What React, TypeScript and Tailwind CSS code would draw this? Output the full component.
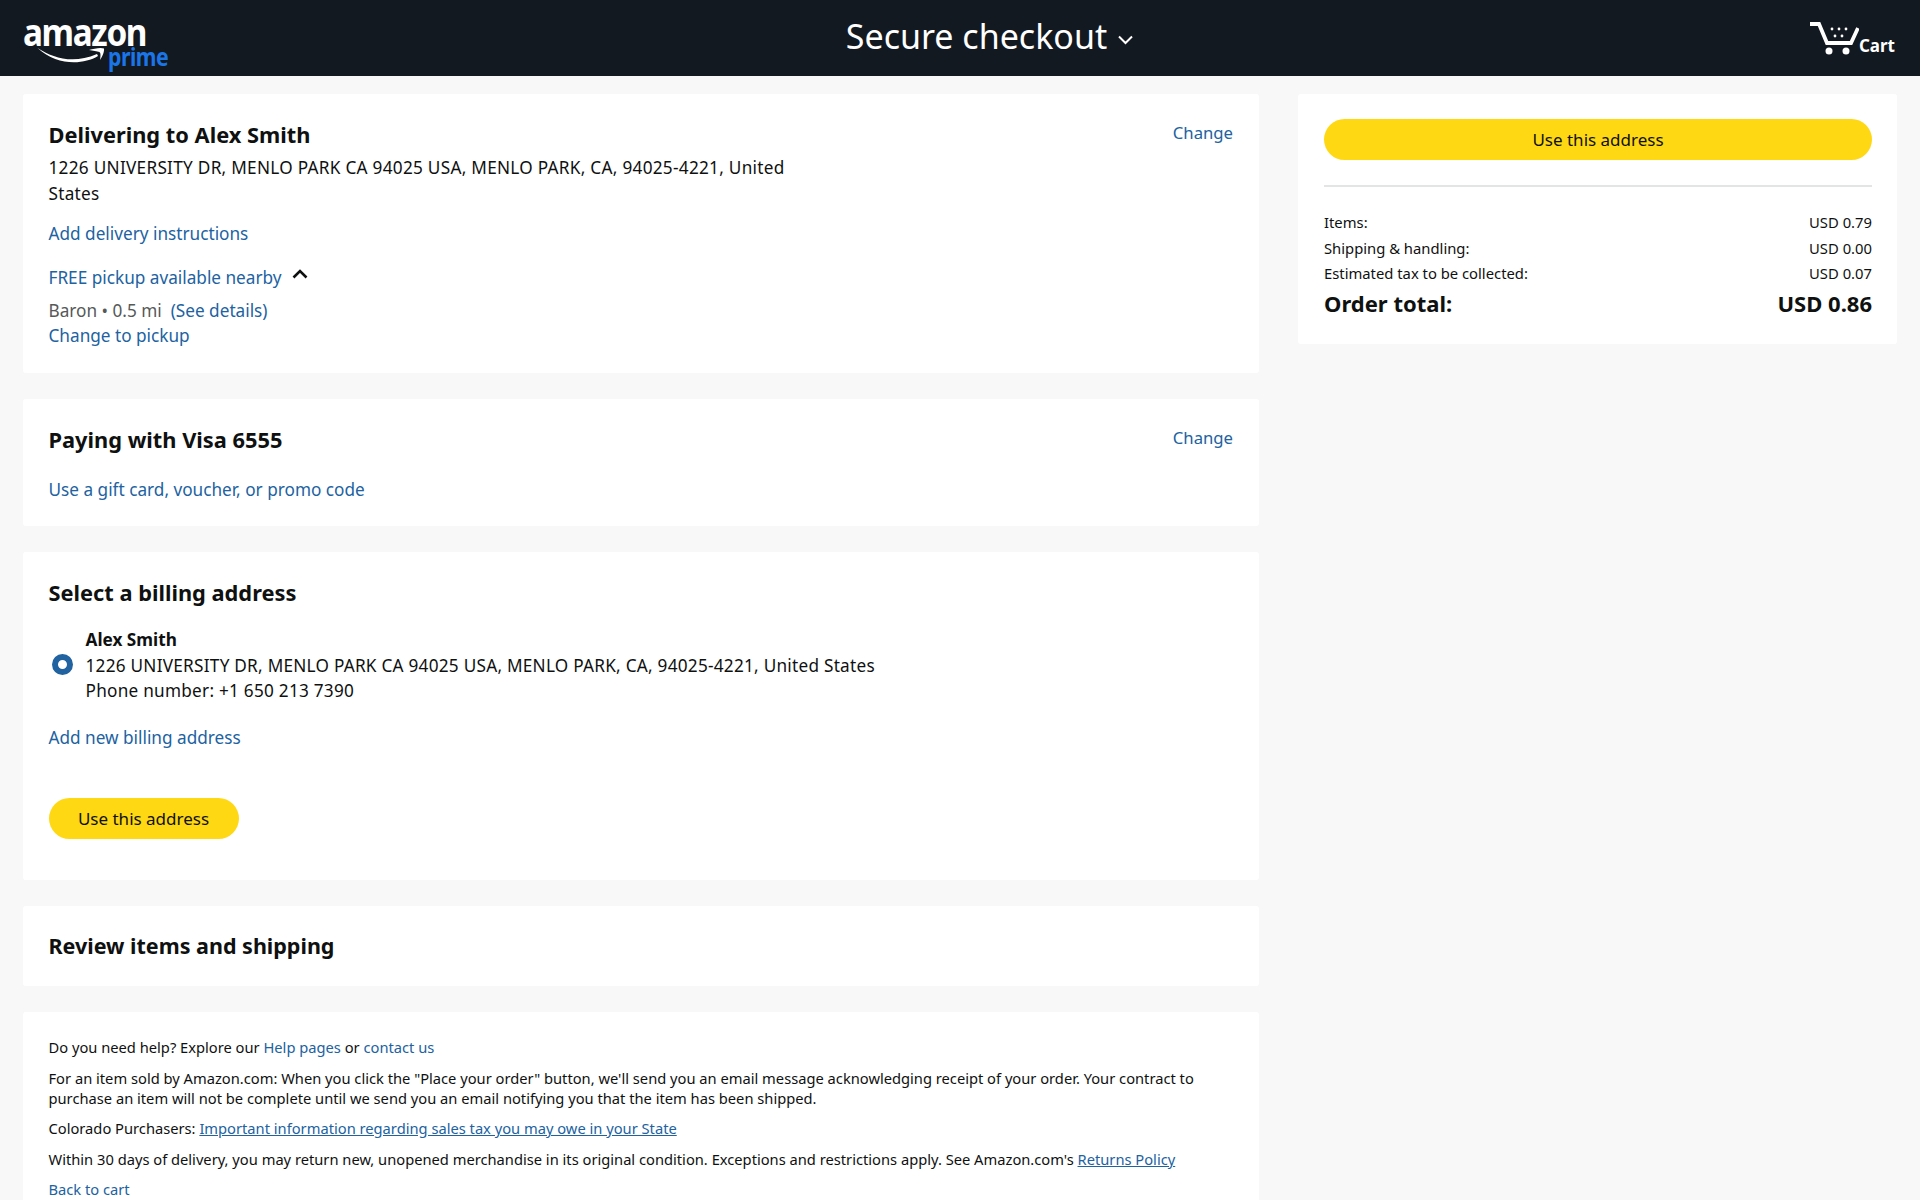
import React from 'react';

const link = 'text-[#2162a1]';

const Card: React.FC<{ className?: string; children: React.ReactNode }> = ({ className = '', children }) => (
  <section className={`bg-white rounded-[3px] ${className}`}>{children}</section>
);

const AmazonLogo = () => (
  <div className="relative w-[150px] h-[60px]">
    <span className="absolute left-0 top-[12px] text-[37px] leading-[24px] font-bold tracking-[-1.5px] text-white origin-left scale-x-90">amazon</span>
    <svg className="absolute left-[14px] top-[39px]" width="74" height="22" viewBox="0 0 74 22" fill="none">
      <path d="M0.5 1 C16 11 36 17.5 60 7 L61 9 C46 18 20 19 0.5 1 Z" fill="#fff" />
      <path d="M52 3 C57 1.5 64 0 67 1.5 C67.5 5 65 10 63 13 C63.5 9 64 6.5 62.5 5 C60 4 56 4 52 3 Z" fill="#fff" />
    </svg>
    <span className="absolute left-[85px] top-[37px] text-[25px] leading-[22px] font-bold tracking-[-0.6px] text-[#1a75e8] origin-left scale-x-[0.85]">prime</span>
  </div>
);

const CartIcon = () => (
  <svg width="50" height="40" viewBox="0 0 50 40" fill="none">
    <path d="M1 4 H10 L18 23 H42 L49 8" stroke="#fff" strokeWidth="3.8" strokeLinejoin="miter" />
    <circle cx="20" cy="31" r="3.5" fill="#fff" />
    <circle cx="37" cy="31" r="3.5" fill="#fff" />
    <g fill="#fff">
      <circle cx="23" cy="9" r="1.4" /><circle cx="30" cy="9" r="1.4" /><circle cx="37" cy="9" r="1.4" />
      <circle cx="26" cy="16" r="1.4" /><circle cx="33" cy="16" r="1.4" />
    </g>
  </svg>
);

const Chevron: React.FC<{ up?: boolean; className?: string; width?: number }> = ({ up, className, width = 2 }) => (
  <svg className={className} viewBox="0 0 16 10" fill="none">
    <path d={up ? 'M1.5 8.5 L8 2 L14.5 8.5' : 'M1.5 1.5 L8 8 L14.5 1.5'} stroke="currentColor" strokeWidth={width} />
  </svg>
);

const YellowButton: React.FC<{ className?: string; children: React.ReactNode }> = ({ className = '', children }) => (
  <button className={`h-[41px] rounded-full bg-[#ffd814] text-[17px] text-[#0f1111] ${className}`}>{children}</button>
);

const SummaryRow: React.FC<{ label: string; value: string }> = ({ label, value }) => (
  <div className="flex justify-between h-[25.5px] leading-[25.5px] text-[14.8px]">
    <span>{label}</span>
    <span>{value}</span>
  </div>
);

export default function App() {
  return (
    <div className="h-[1200px] overflow-hidden bg-[#f8f8f8] text-[#0f1111] text-[17.2px] leading-[25.6px] font-['Noto_Sans',sans-serif]">
      {/* Header */}
      <header className="h-[76px] bg-[#131921] grid grid-cols-[1fr_auto_1fr] items-center px-[23px] text-white">
        <AmazonLogo />
        <div className="flex items-center gap-[10px] ml-[60px]">
          <span className="text-[34px] leading-[40px] relative top-[-2px]">Secure checkout</span>
          <Chevron className="w-[17px] h-[10px] mt-[4px]" />
        </div>
        <div className="flex justify-end items-end mt-[4px] mr-[2px]">
          <CartIcon />
          <span className="text-[17px] leading-[22px] font-bold mb-[3px]">Cart</span>
        </div>
      </header>

      <main className="flex items-start gap-[39px] pt-[18px] px-[23px]">
        {/* Left column */}
        <div className="w-[1236px] flex flex-col gap-[26px]">
          <Card className="h-[279px] pl-[25.5px] pr-[26px] pt-[26px]">
            <div className="flex justify-between items-start">
              <h2 className="text-[21.8px] leading-[30px] font-bold">Delivering to Alex Smith</h2>
              <a className={`text-[16.7px] ${link}`}>Change</a>
            </div>
            <p className="mt-[5px] w-[760px] tracking-[0.28px]">1226 UNIVERSITY DR, MENLO PARK CA 94025 USA, MENLO PARK, CA, 94025-4221, United States</p>
            <a className={`block mt-[15px] ${link}`}>Add delivery instructions</a>
            <div className="flex items-center gap-[10px] mt-[18px]">
              <a className={link}>FREE pickup available nearby</a>
              <Chevron up className="w-[16px] h-[10px] text-[#0f1111] mb-[8px]" width={2.6} />
            </div>
            <p className="mt-[8px] text-[#565959]">Baron • 0.5 mi&nbsp; <a className={link}>(See details)</a></p>
            <a className={`block mt-[-1px] ${link}`}>Change to pickup</a>
          </Card>

          <Card className="h-[127px] pl-[25.5px] pr-[26px] pt-[26px]">
            <div className="flex justify-between items-start">
              <h2 className="text-[21.8px] leading-[30px] font-bold">Paying with Visa 6555</h2>
              <a className={`text-[16.7px] ${link}`}>Change</a>
            </div>
            <a className={`block mt-[22px] ${link}`}>Use a gift card, voucher, or promo code</a>
          </Card>

          <Card className="h-[328px] pl-[25.5px] pr-[26px] pt-[26px]">
            <h2 className="text-[21.8px] leading-[30px] font-bold">Select a billing address</h2>
            <div className="flex items-center gap-[13px] ml-[3px] mt-[19px]">
              <span className="w-[21px] h-[21px] rounded-full border-[6px] border-[#2162a1] bg-white shrink-0 mb-[2px]" />
              <div className="tracking-[0.25px]">
                <p className="font-bold tracking-normal">Alex Smith</p>
                <p>1226 UNIVERSITY DR, MENLO PARK CA 94025 USA, MENLO PARK, CA, 94025-4221, United States</p>
                <p>Phone number: +1 650 213 7390</p>
              </div>
            </div>
            <a className={`block mt-[21px] ${link}`}>Add new billing address</a>
            <YellowButton className="w-[190px] mt-[48px]">Use this address</YellowButton>
          </Card>

          <Card className="h-[80px] pl-[25.5px] pr-[26px] flex items-center">
            <h2 className="text-[21.5px] leading-[30px] font-bold">Review items and shipping</h2>
          </Card>

          <Card className="h-[200px] pl-[25.5px] pr-[26px] pt-[25px] text-[14.7px] leading-[20px]">
            <p>Do you need help? Explore our <a className={link}>Help pages</a> or <a className={link}>contact us</a></p>
            <p className="mt-[10.5px]">For an item sold by Amazon.com: When you click the "Place your order" button, we'll send you an email message acknowledging receipt of your order. Your contract to purchase an item will not be complete until we send you an email notifying you that the item has been shipped.</p>
            <p className="mt-[10.5px]">Colorado Purchasers: <a className={`underline ${link}`}>Important information regarding sales tax you may owe in your State</a></p>
            <p className="mt-[10.5px]">Within 30 days of delivery, you may return new, unopened merchandise in its original condition. Exceptions and restrictions apply. See Amazon.com's <a className={`underline ${link}`}>Returns Policy</a></p>
            <a className={`block mt-[10.5px] ${link}`}>Back to cart</a>
          </Card>
        </div>

        {/* Order summary */}
        <aside className="w-[599px] h-[250px] bg-white rounded-[3px] pl-[26px] pr-[25px] pt-[25px]">
          <YellowButton className="w-full">Use this address</YellowButton>
          <div className="h-[2px] bg-[#e3e4e4] mt-[25px] mb-[23px]" />
          <SummaryRow label="Items:" value="USD 0.79" />
          <SummaryRow label="Shipping & handling:" value="USD 0.00" />
          <SummaryRow label="Estimated tax to be collected:" value="USD 0.07" />
          <div className="flex justify-between text-[22px] leading-[32px] font-bold">
            <span>Order total:</span>
            <span>USD 0.86</span>
          </div>
        </aside>
      </main>
    </div>
  );
}
